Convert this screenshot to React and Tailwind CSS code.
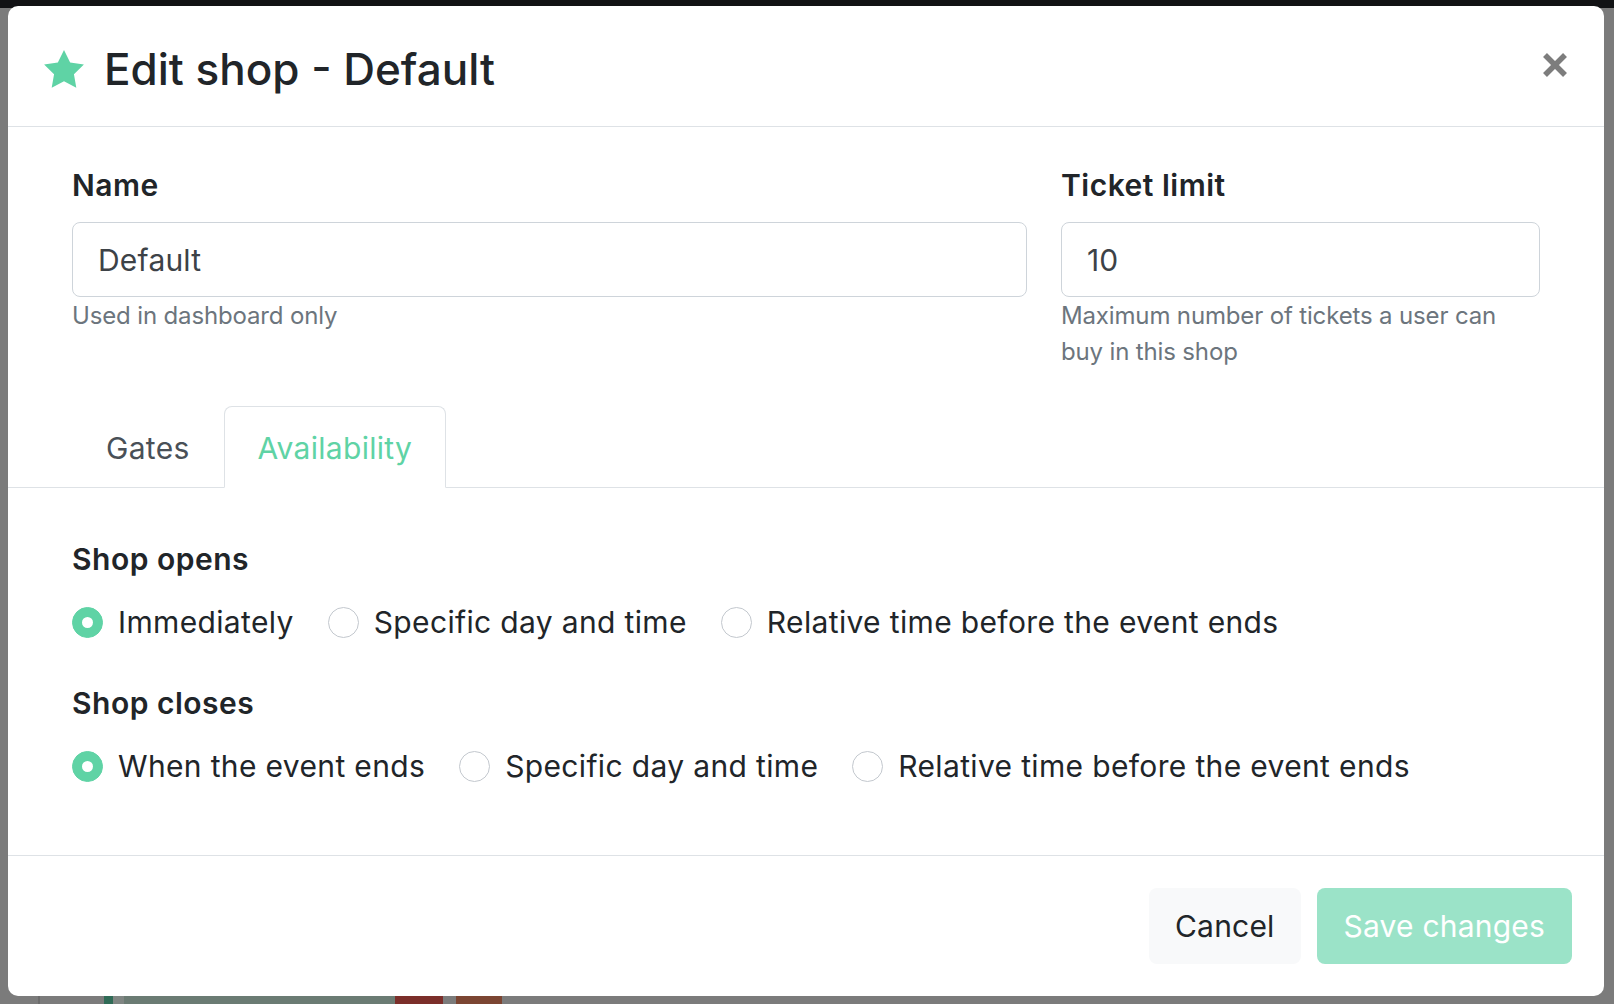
import React, { useState } from "react";

// Radio button styled like the bootstrap "form-check" radios in the shot
const Radio = ({ label, checked, onSelect }) => (
  <label className="flex items-center gap-[15px] cursor-pointer" onClick={onSelect}>
    <span
      className={`flex h-[31px] w-[31px] shrink-0 items-center justify-center rounded-full border ${
        checked ? "border-[#5fd3a5] bg-[#5fd3a5]" : "border-[#c3c8ce] bg-white"
      }`}
    >
      {checked && <span className="h-[11px] w-[11px] rounded-full bg-white" />}
    </span>
    <span className="text-[30px] leading-[45px] tracking-[0.35px] text-[#212529]">{label}</span>
  </label>
);

const RadioGroup = ({ title, options }) => {
  const [value, setValue] = useState(0);
  return (
    <div>
      <h6 className="text-[30px] leading-[45px] font-semibold tracking-[0.5px] text-[#212529]">{title}</h6>
      <div className="mt-[18px] flex items-center gap-x-[34px]">
        {options.map((opt, i) => (
          <Radio key={opt} label={opt} checked={value === i} onSelect={() => setValue(i)} />
        ))}
      </div>
    </div>
  );
};

const Star = () => (
  <svg width="40" height="38" viewBox="2 2 20 19.1" className="shrink-0">
    <polygon
      points="12,2 15.09,8.26 22,9.27 17,14.14 18.18,21.02 12,17.77 5.82,21.02 7,14.14 2,9.27 8.91,8.26"
      fill="#5fd3a5"
    />
  </svg>
);

const CloseIcon = () => (
  <svg width="26" height="26" viewBox="0 0 26 26">
    <line x1="3" y1="3" x2="23" y2="23" stroke="#7d7d7d" strokeWidth="5.5" />
    <line x1="23" y1="3" x2="3" y2="23" stroke="#7d7d7d" strokeWidth="5.5" />
  </svg>
);

export default function App() {
  const [tab, setTab] = useState("availability");

  return (
    <div
      className="relative flex h-[1004px] w-[1614px] flex-col overflow-hidden bg-[#7b7b7b]"
      style={{ fontFamily: "Inter, 'Noto Sans', sans-serif" }}
    >
      {/* dimmed page behind the modal */}
      <div className="h-[8px] bg-[#111214]" />
      <div className="flex-1" />
      <div className="flex h-[8px]">
        <div className="w-[38px]" />
        <div className="w-[2px] bg-[#6c6c6c]" />
        <div className="w-[64px]" />
        <div className="w-[9px] bg-[#2f6b56]" />
        <div className="w-[11px] bg-[#808683]" />
        <div className="w-[271px] bg-[#6b7b73]" />
        <div className="w-[48px] bg-[#7b2e2a]" />
        <div className="w-[13px]" />
        <div className="w-[46px] bg-[#7b4532]" />
      </div>

      {/* modal */}
      <div className="absolute left-[8px] top-[6px] flex h-[990px] w-[1596px] flex-col rounded-[10px] bg-white">
        <div className="flex h-[121px] items-center justify-between border-b border-[#dee2e6] px-9 pt-[5px]">
          <div className="flex items-center gap-[20px]">
            <Star />
            <h5 className="text-[44px] leading-[56px] font-medium text-[#212529]">
              Edit shop - Default
            </h5>
          </div>
          <button type="button" className="-mt-[8px]">
            <CloseIcon />
          </button>
        </div>

        <div className="flex-1 px-16 pt-9">
          <div className="grid grid-cols-[955px_1fr] gap-x-[34px]">
            <div>
              <label className="mb-[14px] block text-[30px] leading-[45px] font-semibold tracking-[0.5px] text-[#212529]">
                Name
              </label>
              <input
                type="text"
                defaultValue="Default"
                className="block h-[75px] w-full rounded-[8px] border border-[#ced4da] px-[25px] text-[30px] tracking-[0.2px] text-[#3d4247] outline-none"
              />
              <p className="mt-[1px] text-[24px] leading-[36px] tracking-[-0.15px] text-[#6c757d]">Used in dashboard only</p>
            </div>
            <div>
              <label className="mb-[14px] block text-[30px] leading-[45px] font-semibold tracking-[0.5px] text-[#212529]">
                Ticket limit
              </label>
              <input
                type="text"
                defaultValue="10"
                className="block h-[75px] w-full rounded-[8px] border border-[#ced4da] px-[25px] text-[30px] text-[#3d4247] outline-none"
              />
              <p className="mt-[1px] text-[24px] leading-[36px] tracking-[-0.15px] text-[#6c757d]">
                Maximum number of tickets a user can
                <br />
                buy in this shop
              </p>
            </div>
          </div>

          <div className="-mx-16 mt-9 flex border-b border-[#dee2e6] px-16">
            {[
              ["gates", "Gates"],
              ["availability", "Availability"],
            ].map(([key, text]) => (
              <button
                key={key}
                type="button"
                onClick={() => setTab(key)}
                className={`-mb-px rounded-t-[8px] border px-[33px] pt-[19px] pb-[16px] text-[30px] leading-[45px] tracking-[0.3px] ${
                  tab === key
                    ? "border-[#dee2e6] border-b-white bg-white text-[#5fd3a5]"
                    : "border-transparent text-[#495057]"
                }`}
              >
                {text}
              </button>
            ))}
          </div>

          <div className="pt-[49px]">
            <RadioGroup
              title="Shop opens"
              options={["Immediately", "Specific day and time", "Relative time before the event ends"]}
            />
            <div className="mt-9">
              <RadioGroup
                title="Shop closes"
                options={["When the event ends", "Specific day and time", "Relative time before the event ends"]}
              />
            </div>
          </div>
        </div>

        <div className="flex justify-end gap-4 border-t border-[#dee2e6] p-8">
          <button
            type="button"
            className="h-[76px] rounded-[8px] bg-[#f8f9fa] px-[26px] text-[30px] tracking-[0.2px] text-[#212529]"
          >
            Cancel
          </button>
          <button
            type="button"
            className="h-[76px] rounded-[8px] bg-[#9be3c8] px-[27px] text-[30px] tracking-[0.2px] text-white"
          >
            Save changes
          </button>
        </div>
      </div>
    </div>
  );
}
